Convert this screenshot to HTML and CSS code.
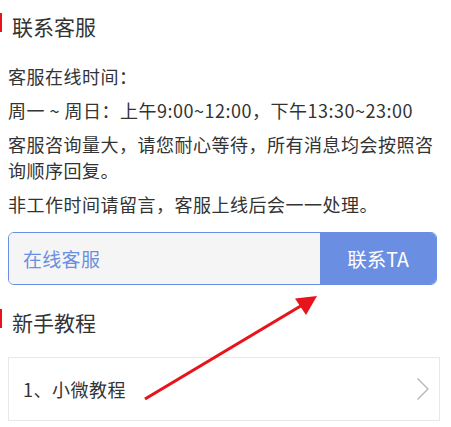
FILE: index.html
```html
<!DOCTYPE html>
<html lang="zh-CN">
<head>
<meta charset="utf-8">
<title>联系客服</title>
<link rel="stylesheet" href="styles.css">
</head>
<body>
<div class="page">
  <div class="section-title first"><span class="bar"></span><span class="title-text">联系客服</span></div>
  <div class="info">
    <p>客服在线时间：</p>
    <p>周一 ~ 周日：上午9:00~12:00，下午13:30~23:00</p>
    <p>客服咨询量大，请您耐心等待，所有消息均会按照咨询顺序回复。</p>
    <p>非工作时间请留言，客服上线后会一一处理。</p>
  </div>
  <div class="contact">
    <div class="contact-label">在线客服</div>
    <div class="contact-btn">联系TA</div>
  </div>
  <div class="section-title second"><span class="bar"></span><span class="title-text">新手教程</span></div>
  <div class="card">
    <span class="card-text">1、小微教程</span>
    <svg class="chevron" width="14" height="24" viewBox="0 0 14 24"><polyline points="1.5,1.5 12,12 1.5,22.5" fill="none" stroke="#b3b3b3" stroke-width="1.3"/></svg>
  </div>
  <svg class="arrow" width="451" height="427" viewBox="0 0 451 427">
    <line x1="145" y1="399" x2="304" y2="304" stroke="#e8141c" stroke-width="3.2"/>
    <polygon points="317,296 295,298.5 306,315" fill="#e8141c"/>
  </svg>
</div>
</body>
</html>
```
FILE: styles.css
```css
html, body {
  margin: 0;
  padding: 0;
  background: #ffffff;
}
body {
  font-family: "Noto Sans CJK SC", "Noto Sans", sans-serif;
  color: #333333;
}
.page {
  position: relative;
  width: 451px;
  height: 427px;
  overflow: hidden;
  padding: 0 11px 0 8px;
  box-sizing: border-box;
}
.section-title {
  display: flex;
  align-items: flex-start;
  margin-left: -8px;
  height: 30px;
}
.section-title.first {
  margin-top: 11px;
}
.section-title.second {
  margin-top: 22px;
}
.bar {
  width: 2px;
  height: 19px;
  margin-top: 2px;
  background: #e8141c;
}
.title-text {
  font-size: 21px;
  line-height: 30px;
  margin-left: 10px;
  color: #333333;
}
.info {
  margin-top: 22px;
}
.info p {
  margin: 0 0 8px 0;
  font-size: 18px;
  letter-spacing: 0.5px;
  line-height: 26px;
  color: #333333;
}
.contact {
  display: flex;
  margin-top: 15px;
  margin-right: 3px;
  height: 53px;
  border: 1px solid #6a8fe2;
  border-radius: 6px;
  box-sizing: border-box;
  overflow: hidden;
}
.contact-label {
  flex: 1;
  background: #f5f5f5;
  color: #6a8fe2;
  font-size: 19px;
  letter-spacing: 0.3px;
  display: flex;
  align-items: center;
  padding-left: 14px;
}
.contact-btn {
  width: 116px;
  background: #6a8fe2;
  color: #ffffff;
  font-size: 19.5px;
  display: flex;
  align-items: center;
  justify-content: center;
}
.card {
  margin-top: 20px;
  height: 64px;
  border: 1px solid #e8e8e8;
  box-sizing: border-box;
  display: flex;
  align-items: center;
  justify-content: space-between;
  padding: 0 9px 0 14px;
}
.card-text {
  font-size: 18px;
  letter-spacing: 0.5px;
  color: #333333;
}
.chevron {
  display: block;
}
.arrow {
  position: absolute;
  left: 0;
  top: 0;
  pointer-events: none;
}
```
